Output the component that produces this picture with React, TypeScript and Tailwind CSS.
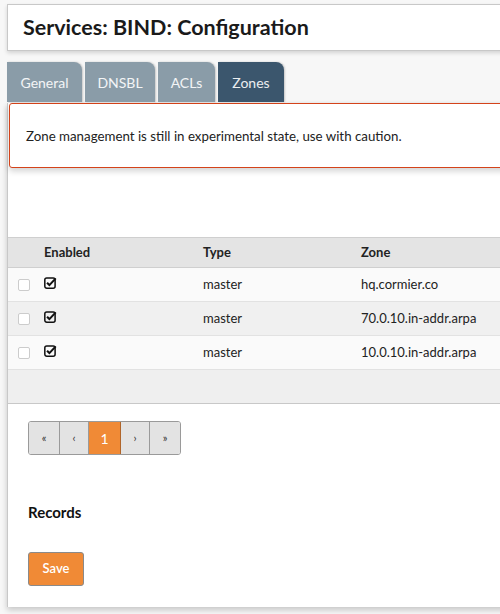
import React from 'react'

const font = { fontFamily: 'Lato, "Open Sans", sans-serif' }

function CheckSquare() {
  return (
    <svg width="13" height="13" viewBox="0 0 12 12" className="block">
      <rect x="0.75" y="1.75" width="9.5" height="9.5" rx="1.8" fill="none" stroke="#111" strokeWidth="1.4" />
      <path d="M2.8 6.2 L5 8.4 L10.8 2.2" fill="none" stroke="#111" strokeWidth="1.9" />
    </svg>
  )
}

const tabs = [
  { id: 'general', label: 'General', w: 'w-[75px]' },
  { id: 'dnsbl', label: 'DNSBL', w: 'w-[70px]' },
  { id: 'acls', label: 'ACLs', w: 'w-[57px]' },
  { id: 'zones', label: 'Zones', w: 'w-[66px]', active: true },
]

const zones = [
  { id: 1, type: 'master', zone: 'hq.cormier.co' },
  { id: 2, type: 'master', zone: '70.0.10.in-addr.arpa' },
  { id: 3, type: 'master', zone: '10.0.10.in-addr.arpa' },
]

export default function App() {
  return (
    <div className="min-h-[614px] w-[500px] overflow-hidden bg-[#f7f7f7] pl-[7px] pt-[4px] text-[#222]" style={font}>
      {/* Page title */}
      <div className="flex h-[47px] w-[520px] items-center border border-[#c8c8c8] bg-white pl-[15px] shadow-[0_2px_4px_rgba(0,0,0,0.15)]">
        <h1 className="text-[21.5px] font-bold text-[#1a1a1a]">Services: BIND: Configuration</h1>
      </div>

      {/* Tabs */}
      <div className="mt-[11px] flex h-[40px] items-end gap-[3px]">
        {tabs.map((t) => (
          <div
            key={t.id}
            className={`flex h-[40px] ${t.w} items-center justify-center rounded-tr-[8px] text-[14px] text-white/90 shadow-[1px_0_2px_rgba(0,0,0,0.2)] ${
              t.active ? 'bg-[#3b566d]' : 'bg-[#8a9ca8]'
            }`}
          >
            {t.label}
          </div>
        ))}
      </div>

      {/* Content panel */}
      <div className="h-[504px] w-[520px] border-l border-[#c8c8c8] bg-white shadow-[0_3px_6px_rgba(0,0,0,0.2)]">
        <div className="ml-[1px] mt-[1px] flex h-[65px] items-center rounded-[3px] border border-[#d4431a] bg-white pl-[16px] pt-[3px] text-[13.3px] text-[#222] shadow-[0_3px_6px_rgba(0,0,0,0.18)]">
          Zone management is still in experimental state, use with caution.
        </div>

        <div className="mt-[69px] text-[13px]">
          <div className="flex h-[31px] items-center border-y border-[#cfcfcf] bg-[#e4e4e4] font-bold">
            <div className="w-[36px]" />
            <div className="w-[159px]">Enabled</div>
            <div className="w-[158px]">Type</div>
            <div>Zone</div>
          </div>
          {zones.map((z, i) => (
            <div
              key={z.id}
              className={`flex h-[34px] items-center border-b border-[#e2e2e2] ${i % 2 === 1 ? 'bg-[#f0f0f0]' : 'bg-[#fafafa]'}`}
            >
              <div className="flex w-[36px] pl-[10px]">
                <span className="block h-[12px] w-[12px] rounded-[2px] border border-[#cccccc] bg-white" />
              </div>
              <div className="w-[159px] pb-[4px]">
                <CheckSquare />
              </div>
              <div className="w-[158px]">{z.type}</div>
              <div>{z.zone}</div>
            </div>
          ))}
          <div className="h-[34px] border-b border-[#c8c8c8] bg-[#efefef]" />
        </div>

        {/* Pagination */}
        <div className="ml-[20px] mt-[17px] flex h-[34px] w-[153px] overflow-hidden rounded-[3px] border border-[#9a9a9a] text-[11px]">
          <div className="flex w-[31px] items-center justify-center border-r border-[#9a9a9a] bg-[#e3e3e3] text-[#333]">«</div>
          <div className="flex w-[29px] items-center justify-center border-r border-[#9a9a9a] bg-[#e3e3e3] text-[#333]">‹</div>
          <div className="flex w-[32px] items-center justify-center border-r border-[#b0652a] bg-[#f08a36] text-[14px] text-white">1</div>
          <div className="flex w-[29px] items-center justify-center border-r border-[#9a9a9a] bg-[#e3e3e3] text-[#333]">›</div>
          <div className="flex flex-1 items-center justify-center bg-[#e3e3e3] text-[#333]">»</div>
        </div>

        <h2 className="ml-[20px] mt-[46px] text-[15px] font-bold text-[#111]">Records</h2>

        <button className="ml-[20px] mt-[28px] flex h-[34px] w-[56px] items-center justify-center rounded-[3px] border border-[#8a8a8a] bg-[#f08a36] text-[13px] font-semibold text-white">
          Save
        </button>
      </div>
    </div>
  )
}
